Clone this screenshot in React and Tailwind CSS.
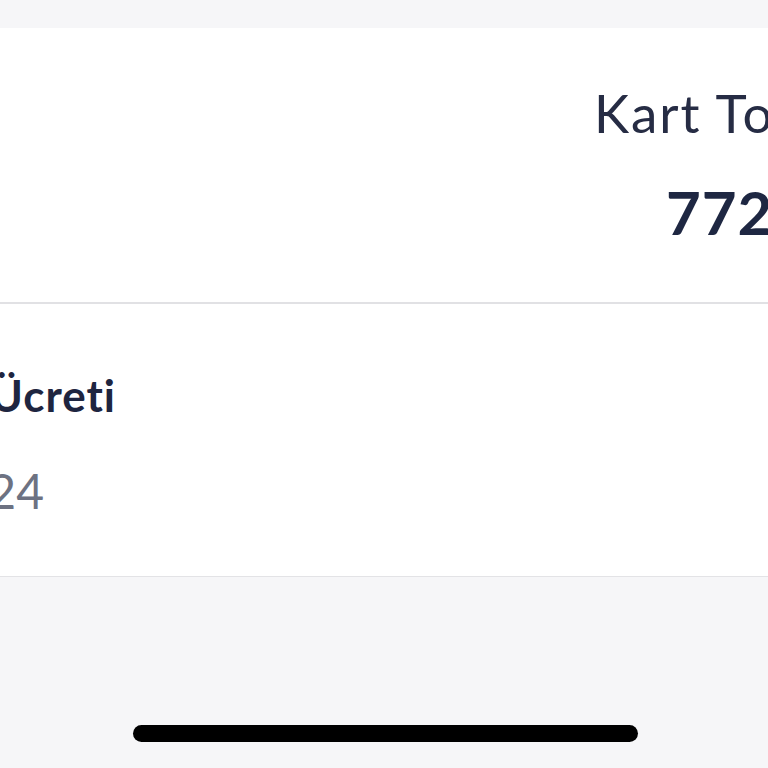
export default function App() {
  return (
    <div
      className="w-[768px] h-[768px] overflow-hidden bg-[#f6f6f8] flex flex-col"
      style={{ fontFamily: "Lato, 'Noto Sans', sans-serif" }}
    >
      <div className="h-[28px] shrink-0" />
      <section className="h-[274px] shrink-0 bg-white flex flex-col overflow-hidden">
        <div className="pt-[58px] pl-[594px] whitespace-nowrap text-[53px] leading-none tracking-[2px] text-[#262c44]">
          Kart Toplamı
        </div>
        <div className="mt-[43px] pl-[666px] whitespace-nowrap text-[60px] leading-none font-bold tracking-[1px] text-[#1e2742]">
          772,50 TL
        </div>
      </section>
      <div className="h-[2px] shrink-0 bg-[#e1e1e4]" />
      <section className="h-[272px] shrink-0 bg-white flex flex-col">
        <div className="pt-[69px] w-[116px] flex justify-end">
          <span className="whitespace-nowrap text-[44px] leading-none font-bold tracking-[1px] text-[#1e2540]">
            Kart Ücreti
          </span>
        </div>
        <div className="mt-[50px] w-[44px] flex justify-end">
          <span className="whitespace-nowrap text-[48px] leading-none text-[#6d7282]">
            24
          </span>
        </div>
      </section>
      <div className="h-[1px] shrink-0 bg-[#e3e3e6]" />
      <div className="pt-[148px] pl-[133px]">
        <div className="w-[505px] h-[17px] rounded-full bg-black" />
      </div>
    </div>
  );
}
